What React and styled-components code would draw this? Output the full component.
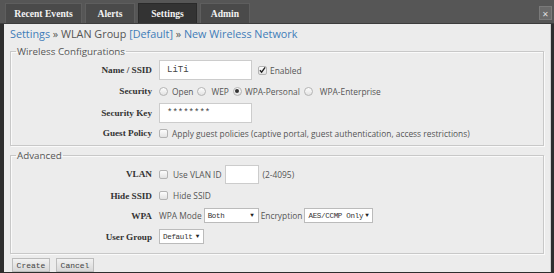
import React from 'react';
import styled, { createGlobalStyle } from 'styled-components';

const GlobalStyle = createGlobalStyle`
  html, body {
    margin: 0;
    padding: 0;
    background: #2e2e2e;
  }
  * { box-sizing: border-box; }
`;

const Page = styled.div`
  width: 554px;
  height: 273px;
  overflow: hidden;
  background: #2e2e2e;
  font-family: 'Open Sans', 'Liberation Sans', sans-serif;
`;

const TopBar = styled.div`
  height: 24px;
  background: #565656;
  display: flex;
  align-items: flex-end;
  padding: 0 2px 0 5px;
  border-bottom: 1px solid #3c3c3c;
`;

const Tabs = styled.div`
  display: flex;
  gap: 3px;
  flex: 1;
`;

const Tab = styled.div`
  height: 20px;
  display: flex;
  align-items: center;
  justify-content: center;
  background: ${(p) => (p.active ? '#333' : '#4a4a4a')};
  border: 1px solid ${(p) => (p.active ? '#2a2a2a' : '#5e5e5e')};
  border-bottom: none;
  color: #f2f2f2;
  font-family: 'Liberation Serif', serif;
  font-weight: bold;
  font-size: 9.6px;
  width: ${(p) => p.w}px;
`;

const CloseBtn = styled.div`
  width: 13px;
  height: 14px;
  margin-bottom: 3px;
  background: #6a6a6a;
  border: 1px solid #7a7a7a;
  color: #ddd;
  font-size: 8px;
  display: flex;
  align-items: center;
  justify-content: center;
`;

const Panel = styled.div`
  margin: 0 3px 0 4px;
  height: 248px;
  background: #ececec;
  border-right: 1px solid #cfcfcf;
  padding: 1px 6px 0 6px;
`;

const Crumbs = styled.div`
  font-size: 10.8px;
  color: #3f7cb8;
  height: 17px;
  line-height: 17px;
  white-space: nowrap;
`;

const Sep = styled.span`
  color: #555;
`;

const Fieldset = styled.fieldset`
  margin: ${(p) => p.mt}px 0 0 0;
  padding: ${(p) => p.pad};
  border: 1px solid #c8c8c8;
  box-shadow: inset 1px 1px 0 #fafafa, 1px 1px 0 #fafafa;
  min-width: 0;
`;

const Legend = styled.legend`
  padding: 0 1px;
  margin-left: 5px;
  font-size: 9.8px;
  color: #555;
  line-height: 11px;
`;

const Row = styled.div`
  display: flex;
  align-items: center;
  height: ${(p) => p.h || 21}px;
`;

const Label = styled.div`
  width: 148px;
  text-align: right;
  padding-right: 7px;
  font-family: 'Liberation Serif', serif;
  font-weight: bold;
  font-size: 9.2px;
  color: #333;
  flex-shrink: 0;
`;

const Text = styled.span`
  font-size: 8.4px;
  color: #555;
  margin: ${(p) => p.m || '0'};
  white-space: nowrap;
`;

const Input = styled.div`
  width: ${(p) => p.w}px;
  height: ${(p) => p.h || 20}px;
  background: #fff;
  border: 1px solid #ccc;
  font-family: 'Liberation Mono', monospace;
  font-size: 9px;
  color: #444;
  padding-left: 7px;
  display: flex;
  align-items: center;
  margin: ${(p) => p.m || '0'};
`;

const Check = styled.span`
  width: 9px;
  height: 9px;
  border: 1px solid #b4b4b4;
  border-radius: 2px;
  background: linear-gradient(#fdfdfd, #e2e2e2);
  display: inline-flex;
  align-items: center;
  justify-content: center;
  margin: ${(p) => p.m || '0'};
  flex-shrink: 0;
`;

const Radio = styled.span`
  width: 9px;
  height: 9px;
  border: 1px solid #b4b4b4;
  border-radius: 50%;
  background: linear-gradient(#fdfdfd, #e2e2e2);
  display: inline-flex;
  align-items: center;
  justify-content: center;
  margin: ${(p) => p.m || '0'};
  flex-shrink: 0;
  &::after {
    content: '';
    display: ${(p) => (p.on ? 'block' : 'none')};
    width: 4px;
    height: 4px;
    border-radius: 50%;
    background: #333;
  }
`;

const Select = styled.div`
  width: ${(p) => p.w}px;
  height: 15px;
  background: #fff;
  border: 1px solid #bbb;
  display: flex;
  align-items: center;
  justify-content: space-between;
  padding: 0 4px 0 3px;
  font-family: 'Liberation Mono', monospace;
  font-size: 7.5px;
  letter-spacing: -0.3px;
  white-space: nowrap;
  color: #333;
  margin: ${(p) => p.m || '0'};
  flex-shrink: 0;
  &::after {
    content: '▼';
    font-size: 6px;
    color: #222;
    margin-left: 2px;
  }
`;

const Buttons = styled.div`
  display: flex;
  gap: 6px;
  margin-top: 4px;
  padding-left: 2px;
`;

const Button = styled.div`
  height: 14px;
  width: ${(p) => p.w}px;
  border: 1px solid #bdbdbd;
  background: linear-gradient(#f2f2f2, #d8d8d8);
  font-family: 'Liberation Mono', monospace;
  font-size: 8px;
  color: #444;
  display: flex;
  align-items: center;
  justify-content: center;
`;

const Tick = () => (
  <svg width="8" height="8" viewBox="0 0 8 8">
    <path d="M1 4.2 L3 6.4 L7 1" stroke="#222" strokeWidth="1.6" fill="none" />
  </svg>
);

export default function App() {
  return (
    <Page>
      <GlobalStyle />
      <TopBar>
        <Tabs>
          <Tab w={77}>Recent Events</Tab>
          <Tab w={50}>Alerts</Tab>
          <Tab w={59} active>Settings</Tab>
          <Tab w={50}>Admin</Tab>
        </Tabs>
        <CloseBtn>✕</CloseBtn>
      </TopBar>
      <Panel>
        <Crumbs>
          Settings <Sep>» WLAN Group</Sep> [Default] <Sep>»</Sep> New Wireless Network
        </Crumbs>
        <Fieldset mt={4} pad="2px 0 3px 0">
          <Legend>Wireless Configurations</Legend>
          <Row h={22}>
            <Label>Name / SSID</Label>
            <Input w={93}>LiTi</Input>
            <Check m="0 0 0 6px"><Tick /></Check>
            <Text m="0 0 0 3px">Enabled</Text>
          </Row>
          <Row h={20}>
            <Label>Security</Label>
            <Radio />
            <Text m="0 0 0 4px">Open</Text>
            <Radio m="0 0 0 4px" />
            <Text m="0 0 0 5px">WEP</Text>
            <Radio on m="0 0 0 4px" />
            <Text m="0 0 0 3px">WPA-Personal</Text>
            <Radio m="0 0 0 4px" />
            <Text m="0 0 0 7px">WPA-Enterprise</Text>
          </Row>
          <Row h={23}>
            <Label>Security Key</Label>
            <Input w={93}>********</Input>
          </Row>
          <Row h={18}>
            <Label>Guest Policy</Label>
            <Check />
            <Text m="0 0 0 4px">Apply guest policies (captive portal, guest authentication, access restrictions)</Text>
          </Row>
        </Fieldset>
        <Fieldset mt={4} pad="2px 0 5px 0">
          <Legend>Advanced</Legend>
          <Row h={22}>
            <Label>VLAN</Label>
            <Check />
            <Text m="0 0 0 5px">Use VLAN ID</Text>
            <Input w={34} h={19} m="0 0 0 3px" />
            <Text m="0 0 0 4px">(2-4095)</Text>
          </Row>
          <Row h={21}>
            <Label>Hide SSID</Label>
            <Check />
            <Text m="0 0 0 5px">Hide SSID</Text>
          </Row>
          <Row h={19}>
            <Label>WPA</Label>
            <Text>WPA Mode</Text>
            <Select w={55} m="0 0 0 2px">Both</Select>
            <Text m="0 0 0 2px">Encryption</Text>
            <Select w={69} m="0 0 0 2px">AES/CCMP Only</Select>
          </Row>
          <Row h={23}>
            <Label>User Group</Label>
            <Select w={45}>Default</Select>
          </Row>
        </Fieldset>
        <Buttons>
          <Button w={38}>Create</Button>
          <Button w={38}>Cancel</Button>
        </Buttons>
      </Panel>
    </Page>
  );
}
